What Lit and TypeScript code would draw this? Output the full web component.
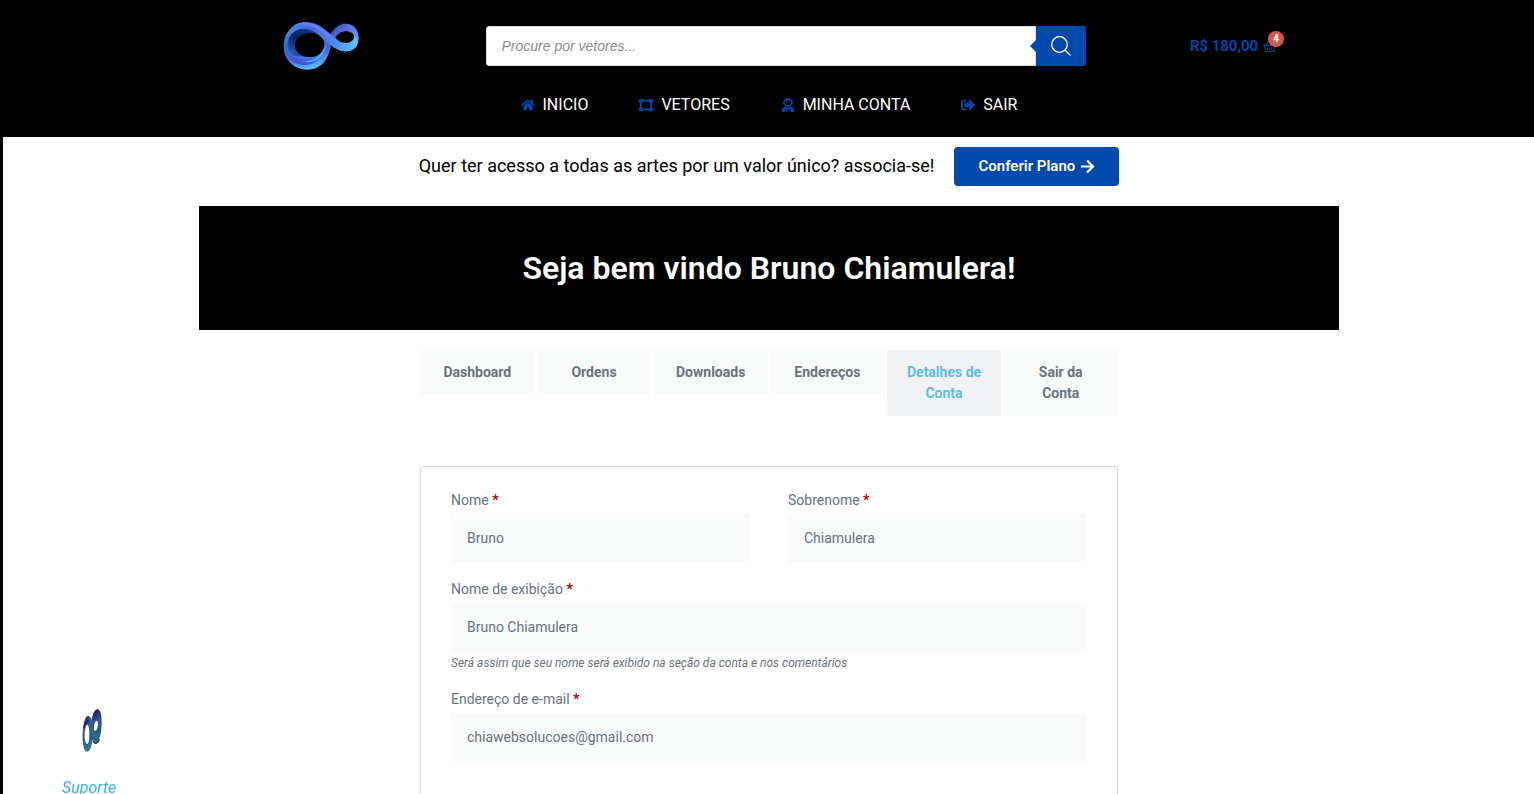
import { LitElement, html, css, svg } from "lit";
import { customElement } from "lit/decorators.js";

const homeIcon = svg`<path d="M280.37 148.26L96 300.11V464a16 16 0 0 0 16 16l112.06-.29a16 16 0 0 0 15.92-16V368a16 16 0 0 1 16-16h64a16 16 0 0 1 16 16v95.64a16 16 0 0 0 16 16.05L464 480a16 16 0 0 0 16-16V300L295.67 148.26a12.19 12.19 0 0 0-15.3 0zM571.6 251.47L488 182.56V44.05a12 12 0 0 0-12-12h-56a12 12 0 0 0-12 12v72.61L318.47 43a48 48 0 0 0-61 0L4.34 251.47a12 12 0 0 0-1.6 16.9l25.5 31A12 12 0 0 0 45.15 301l235.22-193.74a12.19 12.19 0 0 1 15.3 0L530.9 301a12 12 0 0 0 16.9-1.6l25.5-31a12 12 0 0 0-1.7-16.93z"/>`;
const vectorIcon = svg`<path fill-rule="evenodd" d="M32 32h96a32 32 0 0 1 32 32h192a32 32 0 0 1 32-32h96a32 32 0 0 1 32 32v64a32 32 0 0 1-32 32v192a32 32 0 0 1 32 32v64a32 32 0 0 1-32 32h-96a32 32 0 0 1-32-32H160a32 32 0 0 1-32 32H32a32 32 0 0 1-32-32v-64a32 32 0 0 1 32-32V160a32 32 0 0 1-32-32V64a32 32 0 0 1 32-32zM160 128a32 32 0 0 1-32 32H96v192h32a32 32 0 0 1 32 32h192a32 32 0 0 1 32-32h32V160h-32a32 32 0 0 1-32-32zM64 80v32h32V80zM416 80v32h32V80zM64 400v32h32v-32zM416 400v32h32v-32z"/>`;
const userIcon = svg`<path fill-rule="evenodd" d="M64 224h13.500c24.700 56.500 80.900 96 146.500 96s121.800-39.500 146.500-96H384c8.800 0 16-7.200 16-16v-96c0-8.800-7.200-16-16-16h-13.500C345.800 39.500 289.600 0 224 0S102.200 39.500 77.500 96H64c-8.800 0-16 7.200-16 16v96c0 8.800 7.200 16 16 16zm40-88c0-22.100 21.500-40 48-40h144c26.500 0 48 17.900 48 40v24c0 53-43 96-96 96h-48c-53 0-96-43-96-96zm72 72l12-36 36-12-36-12-12-36-12 36-36 12 36 12zM319 320c-28 18-60 31-95 31s-67-13-95-31C57 328 0 380 0 454v10c0 26.500 21.500 48 48 48h80v-64c0-17.700 14.300-32 32-32h128c17.700 0 32 14.300 32 32v64h80c26.500 0 48-21.500 48-48v-10c0-74-57-126-129-134zM160 448v64h48v-64zM288 448a16 16 0 1 0 1 0z"/>`;
const exitIcon = svg`<path d="M497 273L329 441c-15 15-41 4.500-41-17v-96H152c-13.300 0-24-10.700-24-24v-96c0-13.300 10.700-24 24-24h136V88c0-21.400 25.900-32 41-17l168 168c9.300 9.400 9.300 24.600 0 34zM192 436v-40c0-6.600-5.400-12-12-12H96c-17.700 0-32-14.300-32-32V160c0-17.700 14.300-32 32-32h84c6.600 0 12-5.400 12-12V76c0-6.600-5.400-12-12-12H96c-53 0-96 43-96 96v192c0 53 43 96 96 96h84c6.600 0 12-5.400 12-12z"/>`;

const navItems = [
  { label: "INICIO", icon: homeIcon, box: "-32 -32 640 576" },
  { label: "VETORES", icon: vectorIcon, box: "0 0 512 512" },
  { label: "MINHA CONTA", icon: userIcon, box: "0 0 448 512" },
  { label: "SAIR", icon: exitIcon, box: "0 0 512 512" },
];

const tabs = ["Dashboard", "Ordens", "Downloads", "Endereços", "Detalhes de Conta", "Sair da Conta"];

@customElement("app-root")
export class AppRoot extends LitElement {
  static styles = css`
    :host {
      display: block;
      box-sizing: border-box;
      height: 100vh;
      overflow-y: auto;
      scrollbar-width: none;
      border-left: 3px solid #000;
      background: #fff;
      color: #69727d;
      font-family: Roboto, "Liberation Sans", sans-serif;
      font-size: 14px;
      line-height: 21px;
    }
    *, *::before, *::after { box-sizing: border-box; }
    a { color: inherit; text-decoration: none; }
    svg { display: block; }
    .header { background: #000; padding: 11px 0 21px 1px; }
    .body { padding-left: 1px; }
    .wide { max-width: 1140px; margin: 0 auto; }
    .top {
      display: grid;
      grid-template-columns: 245fr 683fr 212fr;
      align-items: center;
      justify-items: center;
      height: 70px;
    }
    .logo svg { width: 110px; height: 70px; }
    .search { display: flex; width: 600px; max-width: 100%; height: 40px; }
    .search input {
      flex: 1;
      min-width: 0;
      border: 1px solid #ddd;
      border-radius: 3px 0 0 3px;
      padding: 0 15px;
      font: 14px "Liberation Sans", sans-serif;
      outline: none;
      color: #444;
    }
    .search input::placeholder { color: #8c8c8c; font-style: italic; opacity: 1; }
    .search button {
      position: relative;
      display: grid;
      place-items: center;
      width: 50px;
      border: 0;
      border-radius: 0 2px 2px 0;
      padding: 0;
      background: #004aad;
    }
    .search button::before {
      content: "";
      position: absolute;
      left: -6px;
      top: 14px;
      border: solid transparent;
      border-width: 6px 6px 6px 0;
      border-right-color: #004aad;
    }
    .cart {
      position: relative;
      display: flex;
      align-items: center;
      gap: 5px;
      color: #004aad;
      font-size: 15px;
      font-weight: 600;
    }
    .count {
      position: absolute;
      right: -8px;
      top: -5px;
      width: 16px;
      height: 16px;
      border-radius: 50%;
      background: #d9534f;
      color: #fff;
      font-size: 10px;
      font-weight: 700;
      line-height: 16px;
      text-align: center;
    }
    .nav { display: flex; justify-content: center; gap: 49px; padding: 13px 2px 0 0; }
    .nav a { display: flex; align-items: center; gap: 6px; color: #fff; font-size: 16px; line-height: 22px; }
    .nav svg { width: 18px; height: 14px; fill: #004aad; }
    .offer { display: flex; justify-content: center; align-items: center; gap: 20px; padding: 10px 0 20px; color: #000; font-size: 18px; }
    .offer p { margin: 0; padding-bottom: 2px; }
    .plan {
      display: flex;
      align-items: center;
      gap: 5px;
      padding: 9px 24px;
      border-radius: 4px;
      background: #004aad;
      color: #fff;
      font-size: 15px;
      font-weight: 600;
    }
    .hero { background: #000; padding: 42px 20px; text-align: center; color: #fff; }
    .hero h1 { margin: 0; font-size: 32px; line-height: 40px; font-weight: 600; }
    .account { max-width: 698px; margin: 20px auto 0; }
    .tabs { display: flex; align-items: flex-start; gap: 2px; margin-bottom: 50px; }
    .tabs a { flex: 1 1 0; min-width: 0; padding: 12px 18px; background: #f9fafa; text-align: center; font-weight: 700; }
    .tabs a.current { background: #f1f2f4; color: #5bc0de; }
    .card { border: 1px solid #d5d8dc; border-radius: 3px; padding: 20px 30px 60px; }
    .row { display: grid; grid-template-columns: 1fr 1fr; gap: 38px; }
    .field { display: block; margin-bottom: 13px; }
    .field label { display: block; line-height: 27px; }
    .field b { color: #b20000; }
    .field input {
      display: block;
      width: 100%;
      height: 49px;
      border: 0;
      padding: 0 16px 2px;
      background: #f9fafa;
      color: #69727d;
      font: inherit;
      outline: none;
    }
    .hint { display: block; padding-top: 2px; font-size: 12px; line-height: 19px; font-style: italic; }
    .support {
      position: fixed;
      left: 62px;
      bottom: -8px;
      display: flex;
      flex-direction: column;
      align-items: center;
      gap: 22px;
      color: #39aef5;
      font-size: 16px;
      font-style: italic;
      line-height: 28px;
    }
  `;

  render() {
    return html`
      <header class="header">
        <div class="wide top">
          <a class="logo" href="#" aria-label="Página inicial">
            <svg viewBox="-8 4 330 210">
              <defs>
                <linearGradient id="left" gradientUnits="userSpaceOnUse" x1="90" y1="40" x2="120" y2="180">
                  <stop offset="0" stop-color="#4f86e6"/><stop offset=".4" stop-color="#2f6fd0"/><stop offset=".7" stop-color="#4569e0"/><stop offset="1" stop-color="#5ac4ff"/>
                </linearGradient>
                <linearGradient id="right" gradientUnits="userSpaceOnUse" x1="190" y1="60" x2="262" y2="112">
                  <stop offset="0" stop-color="#3558c4"/><stop offset=".45" stop-color="#6a70e6"/><stop offset="1" stop-color="#4fb4fb"/>
                </linearGradient>
                <linearGradient id="over" gradientUnits="userSpaceOnUse" x1="50" y1="70" x2="265" y2="110">
                  <stop offset="0" stop-color="#3f8fdf"/><stop offset=".3" stop-color="#4a68dc"/><stop offset=".65" stop-color="#4a86f0"/><stop offset="1" stop-color="#60c8ff"/>
                </linearGradient>
                <linearGradient id="shade" gradientUnits="userSpaceOnUse" x1="120" y1="60" x2="55" y2="130">
                  <stop offset="0" stop-color="#123a8c"/><stop offset=".5" stop-color="#08225c"/><stop offset="1" stop-color="#2a62c8"/>
                </linearGradient>
              </defs>
              <path d="M184 66Q204 38 226 40M212 126Q234 136 254 122" fill="none" stroke="#16337c" stroke-width="2"/>
              <path fill-rule="evenodd" d="M229 42C251 42 267 60 267 84C267 108 251 124 230 125C205 125 190 106 172 88C188 65 202 42 229 42ZM227 65C212 66 203 74 197 84C205 94 214 101 228 102C243 102 254 95 254 84C254 73 244 65 227 65Z" fill="url(#right)"/>
              <path fill-rule="evenodd" d="M112 37C70 37 42 70 42 110C42 151 72 180 114 180C149 180 170 157 180 125L186 100L160 78L112 37ZM122 68C145 70 164 84 164 103C164 128 145 143 119 143C92 143 75 127 75 107C75 84 96 66 122 68Z" fill="url(#left)"/>
              <path d="M50 128C76 154 124 158 158 132C146 163 106 175 74 159Q57 148 50 128Z" fill="#4257d8"/>
              <path d="M98 153C128 158 153 142 170 104C165 142 135 169 98 153Z" fill="#4aa8f6"/>
              <path d="M55 120C46 76 82 48 124 56L146 72C104 62 73 82 75 112C76 124 84 135 92 139C76 142 62 136 55 120Z" fill="url(#shade)"/>
              <path d="M47 82C60 51 84 36 112 37C141 40 158 52 176 68L204 92C216 101 235 104 246 94C254 88 255 78 255 78C269 92 266 112 247 121C226 131 201 123 179 103L150 78C120 50 77 50 47 82Z" fill="url(#over)"/>
              <path d="M73 46C101 35 130 38 153 54L199 91C182 88 162 69 142 57C119 45 94 42 73 46Z" fill="#6a80ee"/>
            </svg>
          </a>
          <form class="search" role="search">
            <input type="search" aria-label="Procure por vetores" placeholder="Procure por vetores..." />
            <button type="button" aria-label="Buscar">
              <svg width="20" height="20" viewBox="0 0 20 20" fill="none" stroke="#fff" stroke-width="1.300"><circle cx="8.500" cy="8.500" r="7.800"/><path d="M14 14l5.500 5.500"/></svg>
            </button>
          </form>
          <a class="cart" href="#">
            <span>R$ 180,00</span>
            <svg width="13" height="13" viewBox="0 0 13 13" fill="none" stroke="#004aad"><path d="M0 5.500h13M1.500 6l1 5.500h8l1-5.500M4.500 7.500v2.500M6.500 7.500v2.500M8.500 7.500v2.500M3 5l2.500-4M10 5L7.500 1"/></svg>
            <span class="count">4</span>
          </a>
        </div>
        <nav class="nav">
          ${navItems.map((n) => html`<a href="#"><svg viewBox=${n.box}>${n.icon}</svg>${n.label}</a>`)}
        </nav>
      </header>
      <div class="body">
        <section class="offer">
          <p>Quer ter acesso a todas as artes por um valor único? associa-se!</p>
          <a class="plan" href="#">Conferir Plano
            <svg width="15" height="15" viewBox="0 0 15 15" fill="none" stroke="#fff" stroke-width="2.200"><path d="M1 7.500h12M7 1.500l6 6-6 6"/></svg>
          </a>
        </section>
        <section class="hero wide"><h1>Seja bem vindo Bruno Chiamulera!</h1></section>
        <main class="account">
          <nav class="tabs">
            ${tabs.map((t, i) => html`<a href="#" class=${i === 4 ? "current" : ""}>${t}</a>`)}
          </nav>
          <form class="card">
            <div class="row">
              <div class="field"><label for="first">Nome <b>*</b></label><input id="first" type="text" value="Bruno" /></div>
              <div class="field"><label for="last">Sobrenome <b>*</b></label><input id="last" type="text" value="Chiamulera" /></div>
            </div>
            <div class="field">
              <label for="display">Nome de exibição <b>*</b></label><input id="display" type="text" value="Bruno Chiamulera" />
              <em class="hint">Será assim que seu nome será exibido na seção da conta e nos comentários</em>
            </div>
            <div class="field"><label for="email">Endereço de e-mail <b>*</b></label><input id="email" type="email" value="chiawebsolucoes@gmail.com" /></div>
          </form>
        </main>
      </div>
      <a class="support" href="#">
        <svg width="26" height="44" viewBox="-12 -2 78 132">
          <defs><linearGradient id="coin" gradientUnits="userSpaceOnUse" x1="10" y1="20" x2="50" y2="130"><stop offset="0" stop-color="#1c2450"/><stop offset=".25" stop-color="#34509c"/><stop offset=".55" stop-color="#2c5c80"/><stop offset="1" stop-color="#32889a"/></linearGradient></defs>
          <path d="M40 96Q46 112 58 92" fill="none" stroke="#1b2855" stroke-width="6"/>
          <path fill-rule="evenodd" d="M24 22C36 24 38 44 38 70C38 104 33 129 21 129C11 129 7 104 8 74C9 46 15 22 24 22ZM22 48C16 50 14 66 14 82C14 96 18 106 22 106C27 104 28 90 28 76C28 62 27 50 22 48Z" fill="url(#coin)"/>
          <path fill-rule="evenodd" d="M52 2C62 2 66 22 65 46C64 80 56 103 46 102C37 101 33 86 32 66C33 30 40 2 52 2ZM50 36C44 38 41 50 42 62C44 69 48 68 51 60C55 51 55 38 50 36Z" fill="url(#coin)"/>
          <path d="M28 28C34 44 34 62 40 80Q46 94 56 74" fill="none" stroke="#2f7088" stroke-width="6"/>
          <path d="M12 58Q16 38 26 36" fill="none" stroke="#191d48" stroke-width="4"/>
        </svg>
        <span>Suporte</span>
      </a>
    `;
  }
}
